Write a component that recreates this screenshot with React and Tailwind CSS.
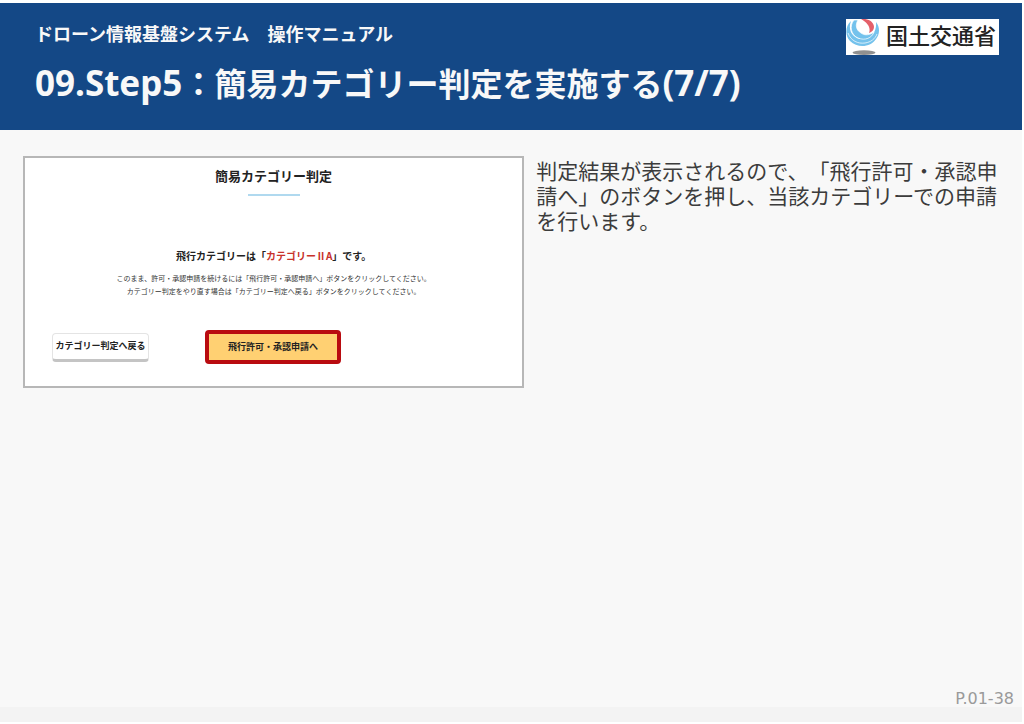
import React from "react";

function App() {
  return (
    <div
      lang="ja"
      className="flex min-h-screen flex-col border-r-2 border-b-2 border-t-3 border-white bg-[#f3f3f3] font-['Noto_Sans_CJK_JP',sans-serif] [text-spacing-trim:space-all]"
    >
      <Header />
      <main className="flex grow items-start gap-3 bg-[#f8f8f8] pt-[26px] pr-5 pl-[23px]">
        <ResultCard />
        <p className="flex-1 pt-0.5 text-[21px] leading-[25px] text-[#3c3c3c]">
          判定結果が表示されるので、「飛行許可・承認申請へ」のボタンを押し、当該カテゴリーでの申請を行います。
        </p>
      </main>
      <footer className="bg-[#f8f8f8] pr-2 text-right font-['DejaVu_Sans',sans-serif] text-base leading-4 text-[#9a9a9a]">
        P.01-38
      </footer>
      <div className="h-[15px]" />
    </div>
  );
}

function Header() {
  return (
    <header className="flex items-start justify-between bg-[#144886] pt-4 pr-[23px] pb-[25px] pl-[35px] text-[#f8f8f8]">
      <div>
        <p className="text-lg leading-7 font-bold">
          ドローン情報基盤システム　操作マニュアル
        </p>
        <h1 className="mt-3 text-[32px] leading-[46px] font-bold whitespace-nowrap">
          <Latin>09.Step5</Latin>：簡易カテゴリー判定を実施する
          <Latin>(7/7)</Latin>
        </h1>
      </div>
      <Logo />
    </header>
  );
}

function Latin({ children }) {
  return (
    <span className="font-['Noto_Sans',sans-serif] text-[35px] leading-none">
      {children}
    </span>
  );
}

function Logo() {
  return (
    <div className="flex h-9 w-[153px] shrink-0 items-start gap-1 bg-white text-[#222]">
      <svg viewBox="0 0 36 36" className="h-9 w-9 shrink-0">
        <ellipse cx="18" cy="33.6" rx="11.5" ry="2.4" fill="#909090" />
        <path
          d="M5 2C-1 7-1 17 4 22c8 8 21 6 26-2 4-5 4-12 0-17 1 9-4 16-12 17C8 21 1 12 5 2Z"
          fill="#74c2ec"
        />
        <path
          d="M2 14c3 8 10 11 17 10 6-1 10-4 12-9"
          fill="none"
          stroke="#fff"
          strokeWidth="0.7"
        />
        <path
          d="M8 1C3 7 5 16 12 19c7 3 14 0 16-6-4 3-9 4-13 1C10 11 9 6 12 1Z"
          fill="#74c2ec"
          stroke="#fff"
          strokeWidth="0.7"
        />
        <path
          d="M15 0c7-1 13 3 13 8 0 3-2 5-5 6 2-5-1-10-8-14Z"
          fill="#e4606a"
        />
      </svg>
      <span className="text-[22px] leading-[30px] font-medium whitespace-nowrap">
        国土交通省
      </span>
    </div>
  );
}

function ResultCard() {
  return (
    <section className="w-[51.2%] shrink-0 border-2 border-[#b7b7b7] bg-white pb-[22px] text-[#222]">
      <div className="flex flex-col items-center pt-1.5 text-center">
        <h2 className="text-[13px] leading-6 font-bold">簡易カテゴリー判定</h2>
        <div className="mt-1.5 h-0.5 w-[52px] bg-[#b0d9ef]" />
        <p className="mt-[50px] text-[10px] leading-5 font-bold">
          飛行カテゴリーは「
          <span className="text-[#c8322b]">カテゴリーⅡA</span>」です。
        </p>
        <p className="mt-1.5 text-[7px] leading-[13px] text-[#333]">
          このまま、許可・承認申請を続けるには「飛行許可・承認申請へ」ボタンをクリックしてください。
          <br />
          カテゴリー判定をやり直す場合は「カテゴリー判定へ戻る」ボタンをクリックしてください。
        </p>
      </div>
      <div className="mt-8 flex items-center gap-14 pl-[27px] text-[9px] font-bold">
        <button className="h-[29px] w-[97px] rounded border border-b-3 border-[#e4e4e4] border-b-[#c4c4c4] bg-white whitespace-nowrap">
          カテゴリー判定へ戻る
        </button>
        <button className="h-[34px] w-[136px] rounded-sm border-4 border-[#b90b10] bg-[#ffd072] whitespace-nowrap">
          飛行許可・承認申請へ
        </button>
      </div>
    </section>
  );
}

export default App;
